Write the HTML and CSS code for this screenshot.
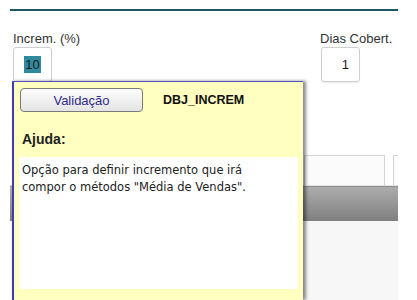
FILE: index.html
```html
<!DOCTYPE html>
<html lang="pt">
<head>
    <meta charset="UTF-8">
    <title>Parâmetros</title>
    <link rel="stylesheet" href="styles.css">
</head>
<body>

<div class="page">
    <div class="rule"></div>

    <div class="fields">
        <div class="field field-increm">
            <label>Increm. (%)</label>
            <div class="box center"><span class="selected">10</span></div>
        </div>
        <div class="field field-dias">
            <label>Dias Cobert.</label>
            <div class="box right">1</div>
        </div>
    </div>

    <div class="tabs">
        <div class="tab"></div>
        <div class="tab"></div>
        <div class="tab"></div>
        <div class="tab"></div>
        <div class="tab"></div>
    </div>
    <div class="grid-head"></div>
    <div class="grid-body"></div>
</div>

<!-- help popup over the field -->
<div class="help">
    <div class="help-top">
        <button class="btn">Validação</button>
        <span class="help-id">DBJ_INCREM</span>
    </div>
    <div class="help-title">Ajuda:</div>
    <div class="help-text">
        Opção para definir incremento que irá<br>
        compor o métodos "Média de Vendas".
    </div>
</div>

</body>
</html>
```

FILE: styles.css
```css
html, body {
    height: 300px;
    overflow: hidden;
}

body {
    margin: 0;
    background-color: white;
    font-family: "Liberation Sans", Arial, sans-serif;
    font-size: 13px;
    color: #333;
}

.page {
    width: 388px;
    margin-left: 10px;
}

.rule {
    margin-top: 9px;
    height: 2px;
    background-color: #1d5667;
}

.fields {
    display: flex;
    margin-top: 20px;
    height: 71px;
}

.field {
    width: 39px;
}

.field label {
    display: block;
    height: 15px;
    line-height: 15px;
    white-space: nowrap;
}

.field-increm {
    margin-left: 3px;
}

.field-dias {
    margin-left: 268px;
}

.box {
    box-sizing: border-box;
    width: 39px;
    height: 35px;
    margin-top: 1px;
    border: 1px solid #cfcfcf;
    border-radius: 3px;
    box-shadow: 0 1px 1px rgba(0, 0, 0, 0.08);
    line-height: 33px;
    color: #1a1a1a;
}

.field-dias .box {
    margin-left: 1px;
}

.center {
    text-align: center;
}

.right {
    text-align: right;
    padding-right: 10px;
}

.selected {
    display: inline-block;
    line-height: 17px;
    padding: 0 1px;
    background-color: #2f8a9c;
}

.tabs {
    display: flex;
    gap: 8px;
    padding-left: 27px;
    margin-top: 53px;
    height: 30px;
    overflow: hidden;
    border-bottom: 1px solid #e2e2e2;
}

.tab {
    flex: 0 0 81px;
    box-sizing: border-box;
    height: 30px;
    border: 1px solid #d4d4d4;
    border-bottom: none;
    background-color: #fbfbfb;
}

.grid-head {
    height: 34px;
    border-top: 1px solid #8f8f8f;
    background: linear-gradient(#acacac, #7f7f7f);
}

.grid-body {
    height: 80px;
    background-color: #f7f7f7;
}

.help {
    position: absolute;
    left: 12px;
    top: 81px;
    width: 289px;
    height: 218px;
    display: flex;
    flex-direction: column;
    background-color: #ffffc0;
    border-left: 2px solid #3c3cb4;
    border-top: 1px solid #5252c4;
    box-shadow: 3px 0 3px rgba(0, 0, 0, 0.45);
}

.help-top {
    display: flex;
    align-items: center;
    margin-top: 6px;
    margin-left: 6px;
}

.btn {
    width: 123px;
    height: 24px;
    border: 1px solid #7a7a7a;
    border-radius: 4px;
    background: linear-gradient(#fdfdfd, #e4e4e4);
    font-family: "Liberation Sans", Arial, sans-serif;
    font-size: 13px;
    color: #2e2a8c;
    padding: 0;
}

.help-id {
    margin-left: 20px;
    font-weight: bold;
    font-size: 12.5px;
    color: #111;
}

.help-title {
    margin: 19px 0 0 8px;
    font-weight: bold;
    font-size: 14px;
    color: #222;
    height: 16px;
}

.help-text {
    box-sizing: border-box;
    margin: 10px 5px 0 5px;
    height: 132px;
    padding: 5px 0 0 3px;
    background-color: white;
    font-family: "DejaVu Sans", Tahoma, sans-serif;
    font-size: 11.5px;
    line-height: 17px;
    color: #222;
}
```
